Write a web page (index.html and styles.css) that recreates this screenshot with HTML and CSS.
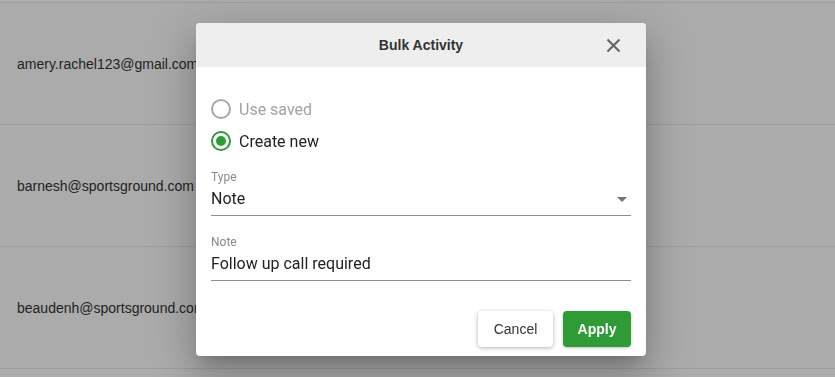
FILE: index.html
```html
<!DOCTYPE html>
<html lang="en">
<head>
<meta charset="utf-8">
<title>Bulk Activity</title>
<link rel="stylesheet" href="styles.css">
</head>
<body>
<div class="list">
  <div class="row">amery.rachel123@gmail.com</div>
  <div class="row">barnesh@sportsground.com</div>
  <div class="row">beaudenh@sportsground.com</div>
  <div class="row row-partial"></div>
</div>
<div class="backdrop"></div>
<div class="dialog">
  <div class="dialog-header">
    <span class="dialog-title">Bulk Activity</span>
    <button class="close" aria-label="Close">
      <svg width="15" height="15" viewBox="0 0 15 15"><path d="M1.5 1.5L13.5 13.5M13.5 1.5L1.5 13.5" stroke="#666" stroke-width="2.2" fill="none"/></svg>
    </button>
  </div>
  <div class="dialog-body">
    <div class="radio-group">
      <label class="radio disabled"><span class="circle"></span><span>Use saved</span></label>
      <label class="radio checked"><span class="circle"><span class="dot"></span></span><span>Create new</span></label>
    </div>
    <div class="field">
      <div class="field-label">Type</div>
      <div class="field-input"><span>Note</span><span class="caret"></span></div>
    </div>
    <div class="field field-note">
      <div class="field-label">Note</div>
      <div class="field-input"><span>Follow up call required</span></div>
    </div>
    <div class="actions">
      <button class="btn btn-cancel">Cancel</button>
      <button class="btn btn-apply">Apply</button>
    </div>
  </div>
</div>
</body>
</html>
```
FILE: styles.css
```css
html, body {
  margin: 0;
  padding: 0;
  background: #ffffff;
  font-family: "Liberation Sans", Arial, sans-serif;
  overflow: hidden;
  height: 377px;
}
.list {
  padding-top: 2px;
}
.row {
  box-sizing: border-box;
  height: 122px;
  border-top: 1px solid #ececec;
  display: flex;
  align-items: center;
  padding-left: 17px;
  font-size: 14px;
  color: #333;
}
.row-partial {
  height: 9px;
}
.backdrop {
  position: fixed;
  inset: 0;
  background: rgba(0, 0, 0, 0.33);
}
.dialog {
  position: absolute;
  left: 196px;
  top: 23px;
  width: 450px;
  background: #fff;
  border-radius: 4px;
  overflow: hidden;
  box-shadow: 0 11px 15px -7px rgba(0,0,0,.2), 0 24px 38px 3px rgba(0,0,0,.14), 0 9px 46px 8px rgba(0,0,0,.12);
}
.dialog-header {
  height: 44px;
  background: #eeeeee;
  display: flex;
  align-items: center;
  justify-content: center;
  position: relative;
}
.dialog-title {
  font-weight: bold;
  font-size: 14px;
  color: #333;
}
.close {
  position: absolute;
  right: 25px;
  top: 15px;
  width: 15px;
  height: 15px;
  padding: 0;
  border: 0;
  background: none;
  display: flex;
}
.dialog-body {
  padding: 26px 15px 9px;
  font-family: Roboto, "Liberation Sans", sans-serif;
}
.radio-group {
  display: flex;
  flex-direction: column;
}
.radio {
  height: 32px;
  display: flex;
  align-items: center;
  gap: 8px;
  font-size: 16px;
  color: #222;
}
.radio .circle {
  box-sizing: border-box;
  width: 20px;
  height: 20px;
  border-radius: 50%;
  border: 2px solid #2e9b38;
  display: flex;
  align-items: center;
  justify-content: center;
}
.radio.disabled {
  color: #a3a3a3;
}
.radio.disabled .circle {
  border-color: #a8a8a8;
}
.dot {
  width: 10px;
  height: 10px;
  border-radius: 50%;
  background: #2e9b38;
}
.field {
  margin-top: 13px;
}
.field-note {
  margin-top: 19px;
}
.field-label {
  font-size: 12px;
  line-height: 14px;
  color: #8a8a8a;
}
.field-input {
  margin-top: 5px;
  font-size: 16px;
  line-height: 20px;
  color: #222;
  padding-bottom: 6px;
  border-bottom: 1px solid #8f8f8f;
  display: flex;
  justify-content: space-between;
  align-items: center;
}
.caret {
  width: 0;
  height: 0;
  border-left: 5px solid transparent;
  border-right: 5px solid transparent;
  border-top: 5px solid #757575;
  margin-right: 4px;
}
.actions {
  margin-top: 30px;
  display: flex;
  justify-content: flex-end;
  gap: 10px;
}
.btn {
  height: 36px;
  border: 0;
  border-radius: 4px;
  font-family: "Liberation Sans", Arial, sans-serif;
  font-size: 14px;
}
.btn-cancel {
  width: 75px;
  background: #fff;
  color: #333;
  box-shadow: 0 1px 4px rgba(0,0,0,.3);
}
.btn-apply {
  width: 68px;
  background: #2e9b36;
  color: #fff;
  font-weight: bold;
  box-shadow: 0 1px 3px rgba(0,0,0,.25);
}
```
